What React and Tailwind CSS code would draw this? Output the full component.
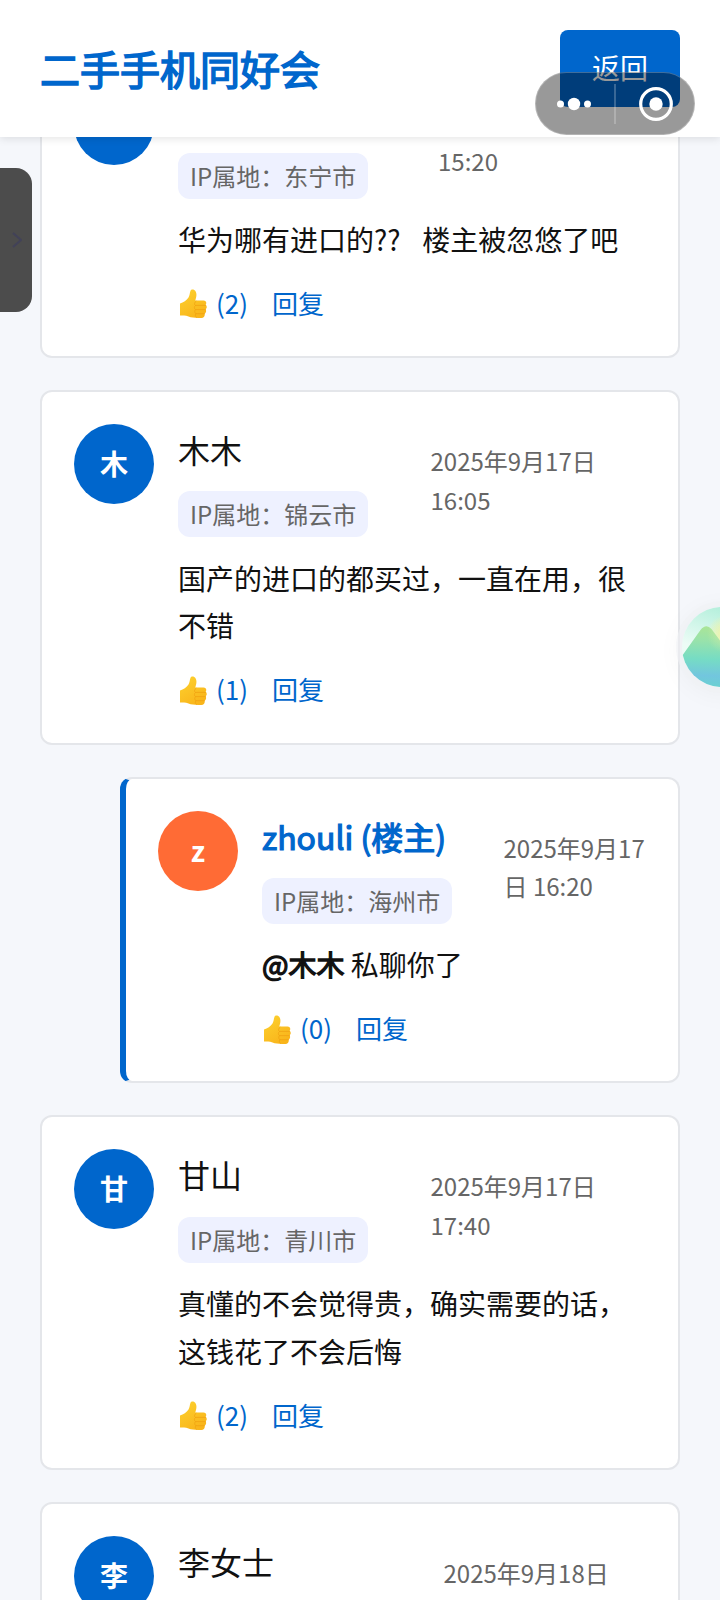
import clsx from "clsx";

const comments = [
  {
    id: 1,
    city: "东宁市",
    date: ["", "15:20"],
    dateWidth: "w-[208px]",
    lines: ["华为哪有进口的??   楼主被忽悠了吧"],
    spacing: "[word-spacing:1px]",
    likes: 2,
  },
  {
    id: 2,
    name: "木木",
    initial: "木",
    city: "锦云市",
    date: ["2025年9月17日", "16:05"],
    dateWidth: "w-[215.5px]",
    lines: ["国产的进口的都买过，一直在用，很", "不错"],
    likes: 1,
  },
  {
    id: 3,
    name: "zhouli (楼主)",
    initial: "z",
    city: "海州市",
    date: ["2025年9月17", "日 16:20"],
    dateWidth: "w-[142.5px]",
    mention: "@木木",
    lines: [" 私聊你了"],
    likes: 0,
    owner: true,
  },
  {
    id: 4,
    name: "甘山",
    initial: "甘",
    city: "青川市",
    date: ["2025年9月17日", "17:40"],
    dateWidth: "w-[215.5px]",
    lines: ["真懂的不会觉得贵，确实需要的话，", "这钱花了不会后悔"],
    likes: 2,
  },
  {
    id: 5,
    name: "李女士",
    initial: "李",
    date: ["2025年9月18日"],
    dateWidth: "w-[202.5px]",
  },
];

function ThumbIcon() {
  return (
    <svg viewBox="0 0 28 30" className="mt-[3px] ml-px h-[30px] w-7 shrink-0">
      <defs>
        <linearGradient id="thumb" x1="0" y1="0" x2="0.6" y2="1">
          <stop offset="0" stopColor="#fdd22f" />
          <stop offset="1" stopColor="#f9b51b" />
        </linearGradient>
      </defs>
      <path
        d="M1 14.5C4.5 13.500 7.500 11.500 9.500 8.500C10.800 6.500 10.600 4 11.500 1.800C12 .5 13.800 .2 15.200 1C17.300 2.300 17.800 5 17.200 8L16.300 11.500H24.500C27 11.500 28 14 26.700 15.800C28.200 17 28 19.300 26.600 20.300C27.600 21.700 27.100 23.800 25.600 24.700C26.200 27 24.800 28.800 22.500 28.900C18 29.200 13 29 9.500 27.600C6.500 26.400 3.500 26.700 1 26.600Z"
        fill="url(#thumb)"
      />
      <path
        d="M17 12.300C15.200 13.500 15 15.400 16.500 16.500C15 17.500 15 19.600 16.600 20.700C15.400 21.700 15.500 23.700 17 24.700C16 25.800 16.200 27.500 17.500 28.500M16.500 16.400H26.500M16.600 20.600H26.500M17 24.700H25.500"
        fill="none"
        stroke="#f0a212"
        strokeWidth="0.8"
        strokeLinecap="round"
      />
    </svg>
  );
}

function Comment({ comment }) {
  const {
    name,
    initial,
    city,
    date,
    dateWidth,
    mention,
    lines,
    spacing,
    likes,
    owner,
  } = comment;

  return (
    <article
      className={clsx(
        "flex gap-6 rounded-xl border-2 border-[#e4e6ea] bg-white p-8",
        owner && "ml-20 border-l-[6px] border-l-[#0066cc]"
      )}
    >
      <div
        className={clsx(
          "flex size-20 shrink-0 items-center justify-center rounded-full pb-0.5 text-[28px] font-bold text-white",
          owner ? "bg-[#ff6b35]" : "bg-[#0066cc]"
        )}
      >
        {initial}
      </div>

      <div className="min-w-0 flex-1">
        <div className="flex h-[113.6px] justify-between">
          <div>
            <div
              className={clsx(
                "h-[51.2px] text-[32px] leading-[51.2px] whitespace-nowrap",
                owner && "text-[#0066cc] [-webkit-text-stroke:1.2px_#0066cc]"
              )}
            >
              {name}
            </div>
            {city && (
              <span className="mt-4 flex h-[46px] w-fit items-center rounded-xl bg-[#eef1ff] px-3 text-2xl whitespace-nowrap text-[#666]">
                IP属地：{city}
              </span>
            )}
          </div>
          <div
            className={clsx(
              "shrink-0 pt-[18px] text-2xl leading-[38.4px] whitespace-nowrap text-[#666]",
              dateWidth
            )}
          >
            {date.map((part, i) => (
              <div key={i} className="h-[38.4px]">
                {part}
              </div>
            ))}
          </div>
        </div>

        {lines && (
          <>
            <div
              className={clsx(
                "mt-[17px] text-[28px] leading-[47.6px] whitespace-pre",
                spacing
              )}
            >
              {lines.map((line) => (
                <p key={line} className="h-[47.6px]">
                  {mention && (
                    <strong className="font-normal [-webkit-text-stroke:1.3px_#111]">
                      {mention}
                    </strong>
                  )}
                  {line}
                </p>
              ))}
            </div>

            <div className="mt-[18.5px] mb-[0.5px] flex h-[41.6px] items-center text-[26px] leading-[41.6px] text-[#0066cc]">
              <ThumbIcon />
              <span className="ml-[9px]">({likes})</span>
              <span className="ml-6">回复</span>
            </div>
          </>
        )}
      </div>
    </article>
  );
}

function Capsule() {
  return (
    <div className="absolute top-[72px] left-[535px] z-20 flex h-[63px] w-[160px] items-center rounded-full border border-white/25 bg-black/40">
      <svg viewBox="0 0 158 61" className="h-full w-full">
        <g fill="#fff">
          <circle cx="24.500" cy="31" r="3.500" />
          <circle cx="38" cy="31" r="6.200" />
          <circle cx="51.500" cy="31" r="3.500" />
          <circle cx="120" cy="31" r="6.700" />
        </g>
        <path d="M79 11V51" stroke="#fff" strokeOpacity="0.3" strokeWidth="1.500" />
        <circle cx="120" cy="31" r="15.300" fill="none" stroke="#fff" strokeWidth="3.200" />
      </svg>
    </div>
  );
}

function MountainBall() {
  return (
    <div className="absolute top-[607px] left-[682px] z-20 size-20 rounded-full shadow-[0_0_0_6px_rgba(240,241,245,0.6),0_4px_24px_4px_rgba(0,0,0,0.04)]">
      <svg viewBox="0 0 80 80" className="size-20 overflow-hidden rounded-full">
        <defs>
          <linearGradient id="sky" x1="0.500" y1="0" x2="0.300" y2="0.550">
            <stop offset="0" stopColor="#b3efdb" />
            <stop offset="1" stopColor="#ecfcf6" />
          </linearGradient>
          <linearGradient id="hill" x1="0.500" y1="0" x2="0.450" y2="1">
            <stop offset="0" stopColor="#abe596" />
            <stop offset="0.250" stopColor="#98e2ab" />
            <stop offset="0.550" stopColor="#76dcc4" />
            <stop offset="0.820" stopColor="#72c6de" />
            <stop offset="1" stopColor="#6bd0d2" />
          </linearGradient>
          <radialGradient id="sun" cx="0.550" cy="0.340" r="0.240">
            <stop offset="0" stopColor="#f1f3a4" />
            <stop offset="1" stopColor="#f1f3a4" stopOpacity="0" />
          </radialGradient>
        </defs>
        <rect width="80" height="80" fill="url(#sky)" />
        <rect width="80" height="80" fill="url(#sun)" />
        <path d="M0 49L18.500 23Q24 16 29.500 22L50 50L80 40V80H0Z" fill="url(#hill)" />
        <rect width="80" height="80" fill="url(#sun)" opacity="0.500" />
      </svg>
    </div>
  );
}

export default function App() {
  return (
    <div className="relative h-[1600px] w-[720px] overflow-hidden bg-[#f5f7fb] font-['Noto_Sans_CJK_SC',sans-serif] text-[#111]">
      <header className="relative z-10 flex h-[137px] items-center justify-between bg-white px-10 shadow-[0_2px_8px_rgba(0,0,0,0.1)]">
        <h1 className="pb-0.5 text-[40px] leading-none text-[#0066cc] [-webkit-text-stroke:1.6px_#0066cc]">
          二手手机同好会
        </h1>
        <button className="h-[77px] w-[120px] rounded-lg bg-[#0066cc] pb-[3px] text-[28px] text-white">
          返回
        </button>
      </header>

      <main className="-mt-[85.6px] flex flex-col gap-8 px-10">
        {comments.map((comment) => (
          <Comment key={comment.id} comment={comment} />
        ))}
      </main>

      <Capsule />

      <div className="absolute top-[168px] left-0 z-20 flex h-36 w-8 items-center justify-center rounded-r-2xl bg-[#4c4c4c]">
        <svg viewBox="0 0 10 16" className="ml-0.5 h-4 w-2.5 shrink-0">
          <path d="M1 1L9 8L1 15" fill="none" stroke="#424258" strokeWidth="2.200" />
        </svg>
      </div>

      <MountainBall />
    </div>
  );
}
